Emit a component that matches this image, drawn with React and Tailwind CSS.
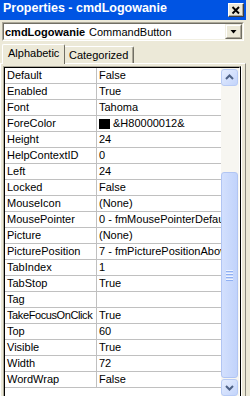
const ROWS = [
  ['Default', 'False'],
  ['Enabled', 'True'],
  ['Font', 'Tahoma'],
  ['ForeColor', '&H80000012&', 'swatch'],
  ['Height', '24'],
  ['HelpContextID', '0'],
  ['Left', '24'],
  ['Locked', 'False'],
  ['MouseIcon', '(None)'],
  ['MousePointer', '0 - fmMousePointerDefault'],
  ['Picture', '(None)'],
  ['PicturePosition', '7 - fmPicturePositionAboveCenter'],
  ['TabIndex', '1'],
  ['TabStop', 'True'],
  ['Tag', ''],
  ['TakeFocusOnClick', 'True', 'tight'],
  ['Top', '60'],
  ['Visible', 'True'],
  ['Width', '72'],
  ['WordWrap', 'False'],
]

function Chevron({ down }) {
  return (
    <svg width="15" height="15" viewBox="0 0 15 15">
      <path d={down ? 'M4 6 L7.5 9.5 L11 6' : 'M4 9 L7.5 5.5 L11 9'} fill="none" stroke="#4d6185" strokeWidth="2" />
    </svg>
  )
}

function ScrollButton({ down }) {
  return (
    <div className="w-[17px] h-[17px] rounded-[3px] border border-[#b8cbf5] bg-linear-to-br from-[#e6eefe] to-[#c3d4fb] flex items-center justify-center">
      <Chevron down={down} />
    </div>
  )
}

export default function App() {
  return (
    <div className="w-[250px] h-[396px] overflow-hidden flex bg-[#ece9d8] text-black font-['Liberation_Sans',Arial,sans-serif] text-[11px]">
      <div className="w-[246px] flex flex-col">
        <div className="h-[20px] bg-[#0054e3] flex justify-between shrink-0">
          <span className="pl-[3px] text-white font-bold text-[12.5px] leading-[16px] whitespace-nowrap">Properties - cmdLogowanie</span>
          <div className="mt-[3px] mr-[2px] w-[16px] h-[14px] bg-[#ece9d8] border-t border-l border-white border-r border-b border-r-[#404040] border-b-[#404040] shadow-[inset_-1px_-1px_0_#aca899] flex items-center justify-center">
            <svg width="10" height="9" viewBox="0 0 10 9">
              <path d="M1.5 1 L8 7.5 M8 1 L1.5 7.5" stroke="#000" strokeWidth="1.9" />
            </svg>
          </div>
        </div>

        <div className="mt-[2px] mx-[2px] h-[19px] shrink-0 border-t border-l border-[#aca899] border-r border-b border-r-white border-b-white">
          <div className="h-full bg-white border-t border-l border-[#716f64] border-r border-b border-r-[#f1efe2] border-b-[#f1efe2] flex">
            <div className="flex-1 pl-[1px] pt-[1px] leading-[15px] whitespace-nowrap overflow-hidden">
              <span className="font-bold">cmdLogowanie</span>
              <span className="ml-[4px]">CommandButton</span>
            </div>
            <div className="w-[17px] h-full border-t border-l border-[#f1efe2] border-r border-b border-r-[#716f64] border-b-[#716f64]">
              <div className="h-full bg-[#ece9d8] border-t border-l border-white border-r border-b border-r-[#aca899] border-b-[#aca899] flex items-center justify-center">
                <svg width="7" height="4" viewBox="0 0 7 4">
                  <path d="M0.5 0 H6.5 L3.5 3.5 Z" fill="#000" />
                </svg>
              </div>
            </div>
          </div>
        </div>

        <div className="mt-[2px] ml-[2px] h-[20px] shrink-0 flex items-end">
          <div className="relative z-10 -mb-[1px] h-[20px] w-[63px] bg-[#ece9d8] border-t border-l border-white border-r border-r-[#716f64] rounded-t-[2px] pl-[5px] leading-[16px] whitespace-nowrap">
            Alphabetic
          </div>
          <div className="h-[17px] w-[69px] bg-[#ece9d8] border-t border-white border-r border-r-[#716f64] shadow-[inset_-1px_0_0_#aca899] rounded-tr-[2px] pl-[4px] pt-[1px] leading-[15px] whitespace-nowrap">
            Categorized
          </div>
        </div>

        <div className="flex-1 min-h-0 flex flex-col bg-[#ece9d8] border-t border-l border-white border-r border-r-[#8c8a80] pt-[2px] pl-[2px] pr-[4px]">
          <div className="flex-1 min-h-0 flex flex-col border-t border-l border-[#aca899] border-r border-r-black shadow-[1px_0_0_#fff]">
            <div className="flex-1 min-h-0 flex border-t border-l border-black border-r border-r-white">
              <div className="flex-1 bg-white flex flex-col overflow-hidden">
                {ROWS.map(([name, value, kind]) => (
                  <div key={name} className="h-[16px] shrink-0 flex border-b border-[#c0c0c0]">
                    <div className={`w-[92px] shrink-0 border-r border-[#c0c0c0] pl-[2px] leading-[15px] whitespace-nowrap overflow-hidden ${kind === 'tight' ? 'tracking-[-0.4px]' : ''}`}>
                      {name}
                    </div>
                    <div className="flex-1 min-w-0 pl-[2px] leading-[15px] whitespace-nowrap overflow-hidden flex items-center">
                      {kind === 'swatch' && <span className="w-[11px] h-[10px] bg-black mr-[3px] shrink-0" />}
                      <span>{value}</span>
                    </div>
                  </div>
                ))}
              </div>
              <div className="w-[18px] shrink-0 bg-[#f7f6f1] flex flex-col pt-[1px]">
                <ScrollButton />
                <div className="h-[86px] shrink-0" />
                <div className="w-[17px] h-[206px] shrink-0 rounded-[3px] border border-[#b1c5f3] bg-linear-to-r from-[#d3e0fd] to-[#c1d3fb] flex flex-col items-center justify-center gap-[1px]">
                  {[0, 1, 2, 3].map(i => (
                    <div key={i} className="w-[7px] h-[1px] bg-[#eef3fe] shadow-[0_1px_0_#8fb0f4] mb-[1px]" />
                  ))}
                </div>
                <div className="mt-[1px]">
                  <ScrollButton down />
                </div>
              </div>
            </div>
          </div>
        </div>
      </div>
      <div className="w-[4px]" />
    </div>
  )
}
